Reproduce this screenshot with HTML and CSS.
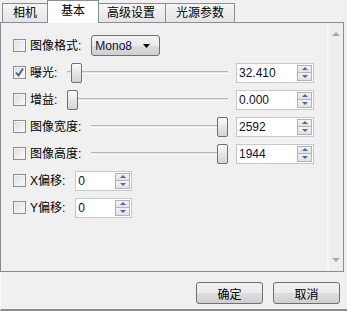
FILE: index.html
```html
<!doctype html>
<html lang="zh-CN">
  <head>
    <meta charset="UTF-8" />
    <title>相机设置</title>
    <link rel="stylesheet" href="styles.css">
  </head>
  <body>
    <div class="dialog">
      <div class="tabs">
        <div class="tab">相机</div>
        <div class="tab active">基本</div>
        <div class="tab">高级设置</div>
        <div class="tab">光源参数</div>
      </div>

      <div class="pane">
        <div class="form">
          <div class="row">
            <span class="check"></span>
            <span class="label">图像格式:</span>
            <div class="combo">
              <span>Mono8</span>
              <svg width="7" height="4" viewBox="0 0 7 4"><path d="M0 0h7L3.5 4z" fill="#000"/></svg>
            </div>
          </div>

          <div class="row">
            <span class="check">
              <svg width="11" height="11" viewBox="0 0 11 11"><path d="M2 5.5l2.5 3L9 1.5" fill="none" stroke="#3d56a0" stroke-width="1.8"/></svg>
            </span>
            <span class="label">曝光:</span>
            <div class="slider">
              <div class="groove"></div>
              <div class="handle" style="left: 4px"></div>
            </div>
            <div class="spin">
              <span class="value">32.410</span>
              <div class="arrows"><span class="up"></span><span class="down"></span></div>
            </div>
          </div>

          <div class="row">
            <span class="check"></span>
            <span class="label">增益:</span>
            <div class="slider">
              <div class="groove"></div>
              <div class="handle" style="left: 0px"></div>
            </div>
            <div class="spin">
              <span class="value">0.000</span>
              <div class="arrows"><span class="up"></span><span class="down"></span></div>
            </div>
          </div>

          <div class="row">
            <span class="check"></span>
            <span class="label">图像宽度:</span>
            <div class="slider">
              <div class="groove"></div>
              <div class="handle" style="right: 0px"></div>
            </div>
            <div class="spin">
              <span class="value">2592</span>
              <div class="arrows"><span class="up"></span><span class="down"></span></div>
            </div>
          </div>

          <div class="row">
            <span class="check"></span>
            <span class="label">图像高度:</span>
            <div class="slider">
              <div class="groove"></div>
              <div class="handle" style="right: 0px"></div>
            </div>
            <div class="spin">
              <span class="value">1944</span>
              <div class="arrows"><span class="up"></span><span class="down"></span></div>
            </div>
          </div>

          <div class="row">
            <span class="check"></span>
            <span class="label">X偏移:</span>
            <div class="spin small">
              <span class="value">0</span>
              <div class="arrows"><span class="up"></span><span class="down"></span></div>
            </div>
          </div>

          <div class="row">
            <span class="check"></span>
            <span class="label">Y偏移:</span>
            <div class="spin small">
              <span class="value">0</span>
              <div class="arrows"><span class="up"></span><span class="down"></span></div>
            </div>
          </div>
        </div>

        <div class="scrollbar">
          <span class="sb-arrow sb-up"></span>
          <span class="sb-arrow sb-down"></span>
        </div>
      </div>

      <div class="footer">
        <button class="btn">确定</button>
        <button class="btn">取消</button>
      </div>
    </div>
  </body>
</html>
```

FILE: styles.css
```css
* {
  margin: 0;
  padding: 0;
  box-sizing: border-box;
}

body {
  font-family: "Liberation Sans", "Noto Sans CJK SC", sans-serif;
  font-size: 12px;
  color: #000;
  background: #f0f0f0;
  width: 347px;
  height: 311px;
  overflow: hidden;
}

.dialog {
  display: flex;
  flex-direction: column;
  height: 311px;
}

/* tabs */
.tabs {
  display: flex;
  align-items: flex-end;
  height: 22px;
  padding-left: 2px;
  position: relative;
  z-index: 1;
}

.tab {
  height: 19px;
  line-height: 18px;
  padding: 0 10px;
  border: 1px solid #898c95;
  border-bottom: none;
  margin-left: -1px;
  background: linear-gradient(#f6f6f6, #e4e4e4);
}

.tab:first-child {
  margin-left: 0;
}

.tab.active {
  height: 23px;
  line-height: 21px;
  margin-bottom: -1px;
  padding: 0 13px;
  margin-left: -1px;
  margin-right: -2px;
  background: #fff;
  position: relative;
  z-index: 2;
}

/* pane */
.pane {
  display: flex;
  height: 250px;
  width: 344px;
  border: 1px solid #898c95;
}

.form {
  flex: 1;
  display: flex;
  flex-direction: column;
  gap: 6px;
  padding: 12px 13px 0 12px;
}

.row {
  display: flex;
  align-items: center;
  height: 21px;
}

.check {
  width: 13px;
  height: 13px;
  border: 1px solid #8e8f8f;
  background: linear-gradient(135deg, #dcdcdc, #fbfbfb);
  box-shadow: inset 0 0 0 1px #f4f4f4;
  display: flex;
  align-items: center;
  justify-content: center;
  margin-right: 4px;
  flex-shrink: 0;
}

.label {
  line-height: 16px;
  margin-right: 10px;
  white-space: nowrap;
}

.combo {
  width: 69px;
  height: 21px;
  border: 1px solid #707070;
  border-radius: 3px;
  background: linear-gradient(#f3f3f3 0%, #ebebeb 50%, #dddddd 51%, #cfcfcf 100%);
  display: flex;
  align-items: center;
  justify-content: space-between;
  padding: 0 9px 0 3px;
  color: #101040;
}

/* slider */
.slider {
  flex: 1;
  height: 20px;
  position: relative;
  display: flex;
  align-items: center;
  margin-right: 8px;
}

.groove {
  width: 100%;
  height: 3px;
  border-top: 1px solid #b6b6b6;
  background: #e6e6e6;
  border-bottom: 1px solid #fff;
}

.handle {
  position: absolute;
  top: 0;
  width: 11px;
  height: 20px;
  border: 1px solid #707070;
  border-radius: 2px;
  background: linear-gradient(#fdfdfd, #e6e6e6 50%, #d4d4d4);
}

/* spin box */
.spin {
  width: 78px;
  height: 20px;
  border: 1px solid #c6c8cc;
  background: #fff;
  display: flex;
  align-items: center;
  justify-content: space-between;
  padding: 0 1px 0 2px;
  flex-shrink: 0;
}

.spin.small {
  width: 57px;
}

.value {
  line-height: 14px;
  color: #101030;
}

.arrows {
  display: flex;
  flex-direction: column;
  width: 15px;
  height: 16px;
  border: 1px solid #b1b5ba;
}

.arrows span {
  flex: 1;
  display: flex;
  align-items: center;
  justify-content: center;
  background: linear-gradient(#f4f4f4, #e2e2e2);
}

.arrows .up {
  border-bottom: 1px solid #b1b5ba;
}

.arrows .up::after,
.arrows .down::after {
  content: "";
  border-left: 3px solid transparent;
  border-right: 3px solid transparent;
}

.arrows .up::after {
  border-bottom: 3px solid #4a68b0;
}

.arrows .down::after {
  border-top: 3px solid #4a68b0;
}

/* scrollbar */
.scrollbar {
  width: 16px;
  display: flex;
  flex-direction: column;
  justify-content: space-between;
  align-items: center;
  padding: 9px 0 9px;
  background: #eeeeee;
  border-left: 2px solid #f7f7f7;
}

.sb-arrow {
  width: 0;
  height: 0;
  border-left: 4px solid transparent;
  border-right: 4px solid transparent;
}

.sb-up {
  border-bottom: 4px solid #a8a8a8;
}

.sb-down {
  border-top: 4px solid #a8a8a8;
}

/* footer */
.footer {
  flex: 1;
  display: flex;
  justify-content: flex-end;
  align-items: flex-start;
  gap: 10px;
  padding: 10px 7px 0 0;
  border-bottom: 2px solid #898c95;
  border-left: 1px solid #fafafa;
}

.btn {
  width: 67px;
  height: 22px;
  font-family: "Liberation Sans", "Noto Sans CJK SC", sans-serif;
  font-size: 12px;
  border: 1px solid #707070;
  border-radius: 3px;
  background: linear-gradient(#f2f2f2 0%, #ebebeb 50%, #dddddd 51%, #cfcfcf 100%);
  color: #000;
}
```
